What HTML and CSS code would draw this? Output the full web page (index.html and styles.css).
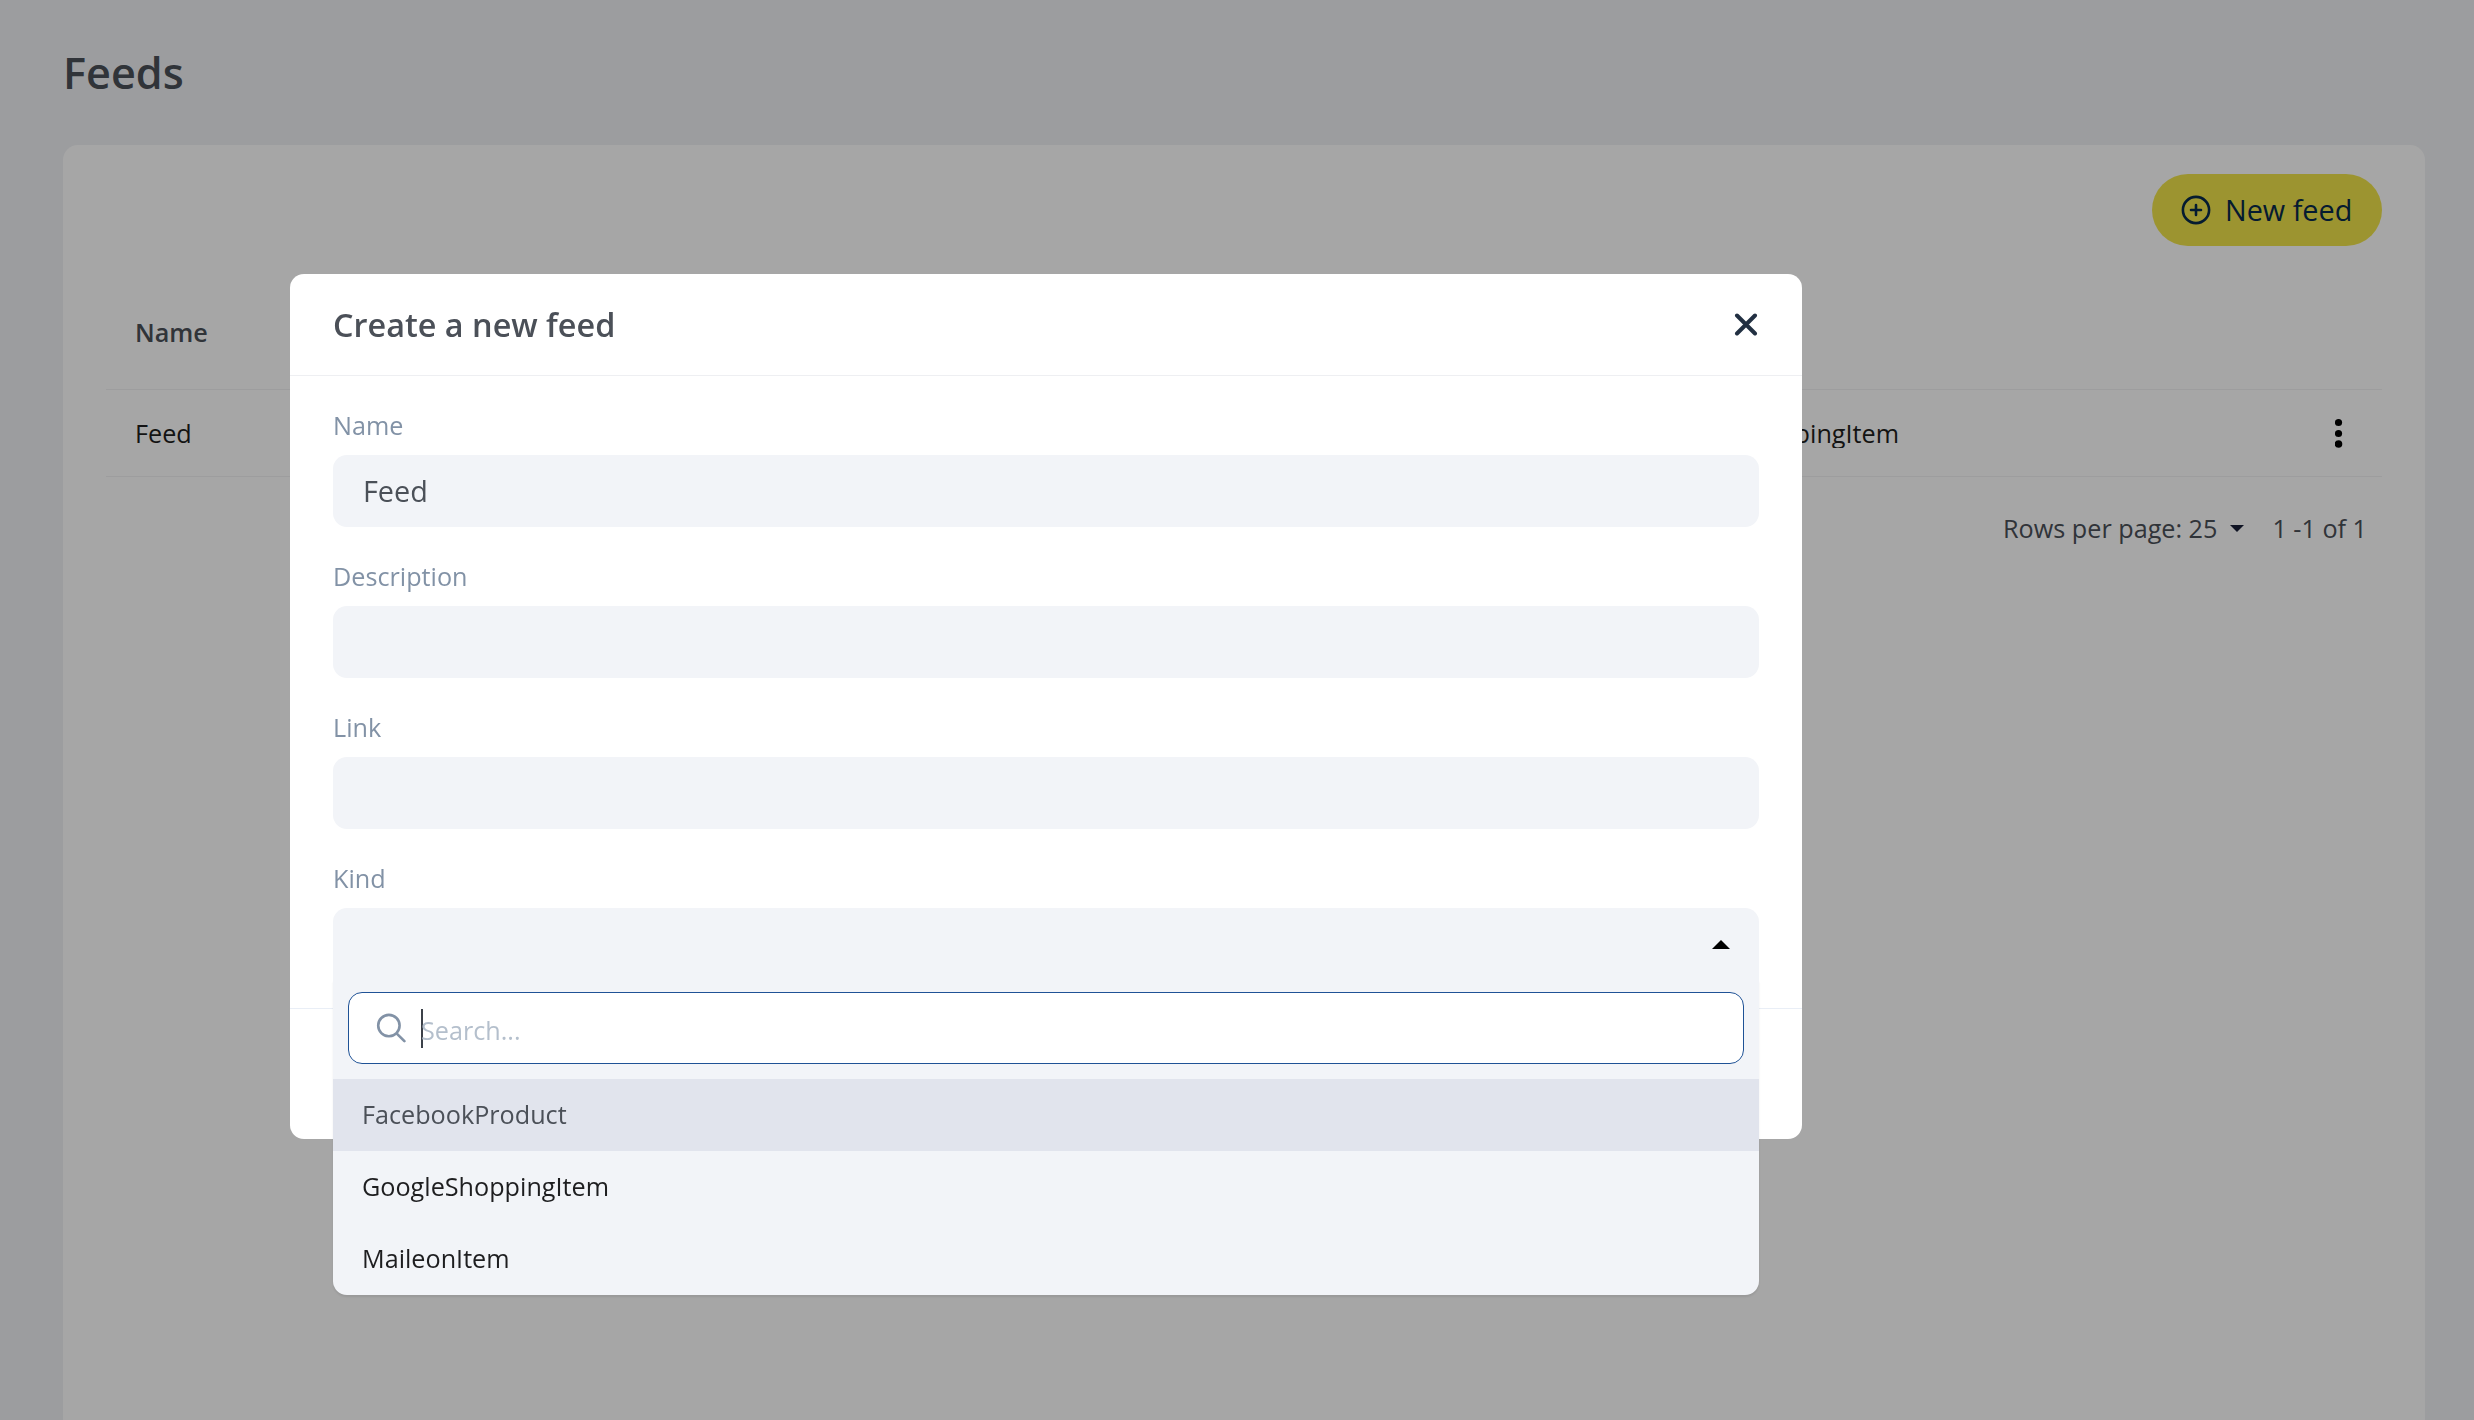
FILE: index.html
```html
<!DOCTYPE html>
<html lang="en">
<head>
	<meta charset="utf-8">
	<meta name="viewport" content="width=device-width, initial-scale=1">
	<title>Feeds</title>
	<link rel="stylesheet" href="styles.css">
</head>
<body>

<main class="page">
	<h1>Feeds</h1>
	<section class="card">
		<div class="toolbar">
			<button class="btn-new">
				<svg width="30" height="30" viewBox="0 0 30 30" fill="none" stroke="currentColor" stroke-width="2.6" stroke-linecap="round">
					<circle cx="15" cy="15" r="13.1"/>
					<path d="M15 10v10M10 15h10"/>
				</svg>
				<span>New feed</span>
			</button>
		</div>
		<div class="row row-head">
			<div class="cell">Name</div>
		</div>
		<div class="row">
			<div class="cell">Feed</div>
			<div class="cell kind"><span>GoogleShoppingItem</span></div>
			<svg class="dots" width="8" height="30" viewBox="0 0 8 30">
				<circle cx="3.5" cy="4.5" r="3.6"/>
				<circle cx="3.5" cy="15.5" r="3.6"/>
				<circle cx="3.5" cy="26" r="3.8"/>
			</svg>
		</div>
		<div class="pager">
			<span>Rows per page: 25</span>
			<i class="arrow-down"></i>
			<span>1 -1 of 1</span>
		</div>
	</section>
</main>

<div class="overlay"></div>

<div class="modal">
	<div class="modal-header">
		<h2>Create a new feed</h2>
		<svg class="close" width="24" height="24" viewBox="0 0 24 24" fill="none" stroke="currentColor" stroke-width="4" stroke-linecap="round">
			<path d="M3 3.5l18 18M21 3.5l-18 18"/>
		</svg>
	</div>
	<div class="modal-body">
		<label>Name</label>
		<input class="field" type="text" value="Feed">
		<label>Description</label>
		<input class="field" type="text">
		<label>Link</label>
		<input class="field" type="text">
		<label>Kind</label>
		<div class="select">
			<div class="select-head"><i class="arrow-up"></i></div>
			<div class="dropdown">
				<div class="search">
					<svg width="30" height="30" viewBox="0 0 30 30" fill="none" stroke="currentColor" stroke-width="2.6" stroke-linecap="round">
						<circle cx="12.9" cy="12.6" r="10.7"/>
						<path d="M20.8 20.6l7.6 7.6"/>
					</svg>
					<i class="caret"></i>
					<span>Search...</span>
				</div>
				<div class="option active">FacebookProduct</div>
				<div class="option">GoogleShoppingItem</div>
				<div class="option">MaileonItem</div>
			</div>
		</div>
	</div>
	<div class="modal-footer"></div>
</div>

</body>
</html>
```

FILE: styles.css
```css
*,*:after,*:before{box-sizing: border-box; margin: 0; padding: 0;}

body{
	height: 1420px;
	overflow: hidden;
	background: #f0f2f5;
	color: #4b5058;
	font-family: "Open Sans", sans-serif;
	font-size: 25.2px;
}

.page{
	display: flex;
	flex-direction: column;
	height: 1420px;
	padding: 0 49px 0 63px;
}

h1{
	height: 145px;
	line-height: 145px;
	font-size: 43.2px;
	font-weight: 600;
}

.card{
	flex: 1;
	padding: 29px 43px 0;
	background: #fff;
	border-radius: 15px 15px 0 0;
}

.toolbar{
	display: flex;
	justify-content: flex-end;
	margin-bottom: 29px;
}

.btn-new{
	display: flex;
	align-items: center;
	gap: 14px;
	width: 230px;
	height: 72px;
	padding-left: 29px;
	border: none;
	border-radius: 36px;
	background: #f0e44b;
	color: #082a4a;
	font-family: inherit;
	font-size: 28.8px;
}

.btn-new span{padding-bottom: 1px;}

.row{
	display: flex;
	align-items: center;
	height: 87px;
	padding: 0 39px 0 29px;
	border-bottom: 1px solid #f1f1f3;
	color: #1e1e20;
}

.row-head{
	height: 115px;
	color: #4b5058;
	font-weight: 600;
}

.cell{width: 1517px;}

.kind{flex: 1;}

.kind span{
	display: block;
	height: 30px;
	line-height: 30px;
	overflow: hidden;
}

.dots{fill: #000;}

.pager{
	display: flex;
	align-items: center;
	justify-content: flex-end;
	height: 102px;
	padding-right: 15px;
}

.arrow-down{
	margin: 0 28px 0 13px;
	border: 7px solid transparent;
	border-top-color: #1a2038;
	border-bottom: none;
}

.overlay{
	position: fixed;
	inset: 0;
	background: rgba(0, 0, 0, 0.35);
}

.modal{
	position: absolute;
	top: 274px;
	left: 290px;
	width: 1512px;
	height: 865px;
	background: #fff;
	border-radius: 14px;
}

.modal-header{
	display: flex;
	align-items: center;
	justify-content: space-between;
	height: 102px;
	padding: 0 44px 1px 43px;
	border-bottom: 1px solid #eeeff2;
}

h2{
	font-size: 32.4px;
	font-weight: 600;
}

.close{color: #223042;}

.modal-body{
	height: 632px;
	padding: 28px 43px 0;
}

label{
	display: block;
	height: 51px;
	line-height: 43px;
	color: #8292a6;
}

.field{
	display: block;
	width: 100%;
	height: 72px;
	margin-bottom: 28px;
	padding: 0 29px 1px 30px;
	border: none;
	border-radius: 14px;
	background: #f2f4f8;
	color: #4b5058;
	font-family: inherit;
	font-size: 28.8px;
}

.select{position: relative;}

.select-head{
	display: flex;
	align-items: center;
	justify-content: flex-end;
	height: 72px;
	padding-right: 29px;
	border-radius: 14px 14px 0 0;
	background: #f2f4f8;
}

.arrow-up{
	border: 9px solid transparent;
	border-bottom-color: #000;
	border-top: none;
}

.dropdown{
	position: absolute;
	top: 72px;
	left: 0;
	width: 100%;
	padding-top: 12px;
	border-radius: 0 0 14px 14px;
	background: #f2f4f8;
	box-shadow: 0 2px 2px rgba(0, 0, 0, 0.08);
}

.search{
	display: flex;
	align-items: center;
	height: 72px;
	margin: 0 15px 15px;
	padding-left: 27px;
	border: 1px solid #1f5296;
	border-radius: 14px;
	background: #fff;
	color: #8292a6;
}

.caret{
	width: 2px;
	height: 39px;
	margin: 0 -2px 0 15px;
	background: #3c4149;
}

.search span{
	padding-top: 3px;
	color: #b4bfcc;
}

.option{
	height: 72px;
	padding-left: 29px;
	line-height: 71px;
	color: #1e1e20;
}

.option.active{
	background: #e1e4ed;
	color: #4b5058;
}

.modal-footer{
	height: 131px;
	border-top: 1px solid #e9eef6;
}
```
